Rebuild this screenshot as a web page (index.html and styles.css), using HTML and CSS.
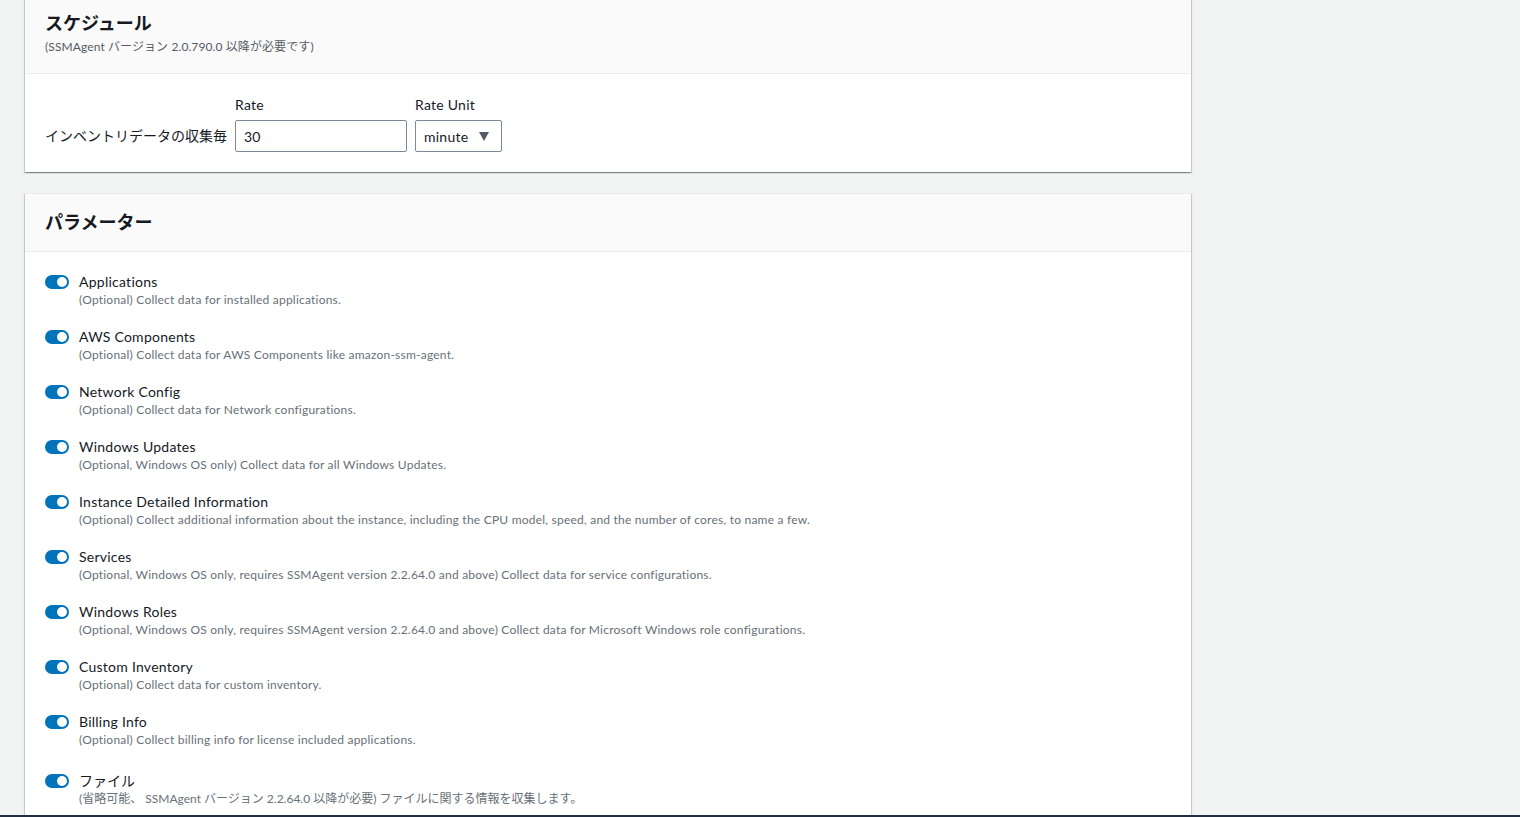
FILE: index.html
```html
<!DOCTYPE html>
<html lang="ja">
<head>
<meta charset="utf-8">
<title>Inventory</title>
<link rel="stylesheet" href="styles.css">
</head>
<body>
<main class="content">
  <section class="card card-first">
    <header class="card-header">
      <h2 class="card-title">スケジュール</h2>
      <p class="card-subtitle">(SSMAgent バージョン 2.0.790.0 以降が必要です)</p>
    </header>
    <div class="card-body schedule-body">
      <div class="schedule-label">インベントリデータの収集毎</div>
      <div class="field">
        <label class="field-label">Rate</label>
        <div class="input">30</div>
      </div>
      <div class="field">
        <label class="field-label">Rate Unit</label>
        <div class="select"><span>minute</span><span class="caret"></span></div>
      </div>
    </div>
  </section>

  <section class="card">
    <header class="card-header">
      <h2 class="card-title">パラメーター</h2>
    </header>
    <div class="card-body params-body">
      <div class="item">
        <span class="toggle"><span class="knob"></span></span>
        <div class="item-text">
          <div class="item-label">Applications</div>
          <div class="item-desc">(Optional) Collect data for installed applications.</div>
        </div>
      </div>
      <div class="item">
        <span class="toggle"><span class="knob"></span></span>
        <div class="item-text">
          <div class="item-label">AWS Components</div>
          <div class="item-desc">(Optional) Collect data for AWS Components like amazon-ssm-agent.</div>
        </div>
      </div>
      <div class="item">
        <span class="toggle"><span class="knob"></span></span>
        <div class="item-text">
          <div class="item-label">Network Config</div>
          <div class="item-desc">(Optional) Collect data for Network configurations.</div>
        </div>
      </div>
      <div class="item">
        <span class="toggle"><span class="knob"></span></span>
        <div class="item-text">
          <div class="item-label">Windows Updates</div>
          <div class="item-desc">(Optional, Windows OS only) Collect data for all Windows Updates.</div>
        </div>
      </div>
      <div class="item">
        <span class="toggle"><span class="knob"></span></span>
        <div class="item-text">
          <div class="item-label">Instance Detailed Information</div>
          <div class="item-desc">(Optional) Collect additional information about the instance, including the CPU model, speed, and the number of cores, to name a few.</div>
        </div>
      </div>
      <div class="item">
        <span class="toggle"><span class="knob"></span></span>
        <div class="item-text">
          <div class="item-label">Services</div>
          <div class="item-desc">(Optional, Windows OS only, requires SSMAgent version 2.2.64.0 and above) Collect data for service configurations.</div>
        </div>
      </div>
      <div class="item">
        <span class="toggle"><span class="knob"></span></span>
        <div class="item-text">
          <div class="item-label">Windows Roles</div>
          <div class="item-desc">(Optional, Windows OS only, requires SSMAgent version 2.2.64.0 and above) Collect data for Microsoft Windows role configurations.</div>
        </div>
      </div>
      <div class="item">
        <span class="toggle"><span class="knob"></span></span>
        <div class="item-text">
          <div class="item-label">Custom Inventory</div>
          <div class="item-desc">(Optional) Collect data for custom inventory.</div>
        </div>
      </div>
      <div class="item">
        <span class="toggle"><span class="knob"></span></span>
        <div class="item-text">
          <div class="item-label">Billing Info</div>
          <div class="item-desc">(Optional) Collect billing info for license included applications.</div>
        </div>
      </div>
      <div class="item item-ja">
        <span class="toggle"><span class="knob"></span></span>
        <div class="item-text">
          <div class="item-label">ファイル</div>
          <div class="item-desc">(省略可能、 SSMAgent バージョン 2.2.64.0 以降が必要) ファイルに関する情報を収集します。</div>
        </div>
      </div>
    </div>
  </section>
</main>
<div class="footer-bar"></div>
</body>
</html>
```

FILE: styles.css
```css
html, body {
  margin: 0;
  padding: 0;
  height: 100%;
  overflow: hidden;
}

body {
  background: #f2f3f3;
  font-family: "Lato", "Noto Sans CJK JP", sans-serif;
  color: #16191f;
  font-size: 14px;
  letter-spacing: 0.25px;
}

.content {
  padding-left: 25px;
}

.card {
  width: 1166px;
  background: #ffffff;
  border-top: 1px solid #eaeded;
  box-shadow: 0 1px 1px 0 rgba(0, 28, 36, 0.3), 1px 1px 1px 0 rgba(0, 28, 36, 0.15), -1px 1px 1px 0 rgba(0, 28, 36, 0.15);
  margin-bottom: 21px;
}

.card-first {
  margin-top: -6px;
}

.card-header {
  background: #fafafa;
  border-bottom: 1px solid #eaeded;
  padding: 17px 20px 18px;
}

.card-title {
  margin: 0;
  font-size: 18px;
  line-height: 22px;
  font-weight: 700;
  color: #16191f;
  letter-spacing: 0;
}

.card-subtitle {
  margin: 5px 0 0;
  font-size: 12px;
  line-height: 16px;
  color: #545b64;
  letter-spacing: 0.1px;
}

.card-body {
  padding: 20px;
}

.schedule-body {
  display: flex;
  align-items: flex-end;
  gap: 8px;
  padding-top: 21px;
}

.schedule-label {
  line-height: 32px;
  font-size: 14px;
  letter-spacing: 0;
}

.field {
  display: flex;
  flex-direction: column;
}

.field-label {
  font-size: 14px;
  line-height: 20px;
  margin-bottom: 5px;
  color: #16191f;
}

.input {
  width: 162px;
  height: 30px;
  border: 1px solid #7d8998;
  border-radius: 2px;
  padding: 0 0 0 8px;
  line-height: 31px;
}

.select {
  width: 87px;
  height: 32px;
  border: 1px solid #7d8998;
  border-radius: 2px;
  display: flex;
  align-items: center;
  padding-left: 8px;
  box-sizing: border-box;
  gap: 11px;
}

.caret {
  width: 0;
  height: 0;
  border-left: 5.5px solid transparent;
  border-right: 5.5px solid transparent;
  border-top: 9px solid #545b64;
}

.params-body {
  display: flex;
  flex-direction: column;
  gap: 19px;
}

.item {
  display: flex;
  align-items: flex-start;
  gap: 10px;
}

.item-ja {
  margin-top: 4px;
}

.toggle {
  flex: none;
  width: 24px;
  height: 14px;
  margin-top: 3px;
  border-radius: 7px;
  background: #0073bb;
  display: flex;
  align-items: center;
  justify-content: flex-end;
  padding-right: 2px;
  box-sizing: border-box;
}

.knob {
  width: 10px;
  height: 10px;
  border-radius: 50%;
  background: #ffffff;
}

.item-label {
  font-size: 14px;
  line-height: 20px;
  color: #16191f;
}

.item-desc {
  font-size: 12px;
  line-height: 16px;
  color: #687078;
  letter-spacing: 0.22px;
}

.item-ja .item-label {
  letter-spacing: 0;
}

.item-ja .item-desc {
  letter-spacing: 0;
}

.footer-bar {
  position: fixed;
  left: 0;
  right: 0;
  bottom: 0;
  height: 2px;
  background: #232f3e;
}
```
